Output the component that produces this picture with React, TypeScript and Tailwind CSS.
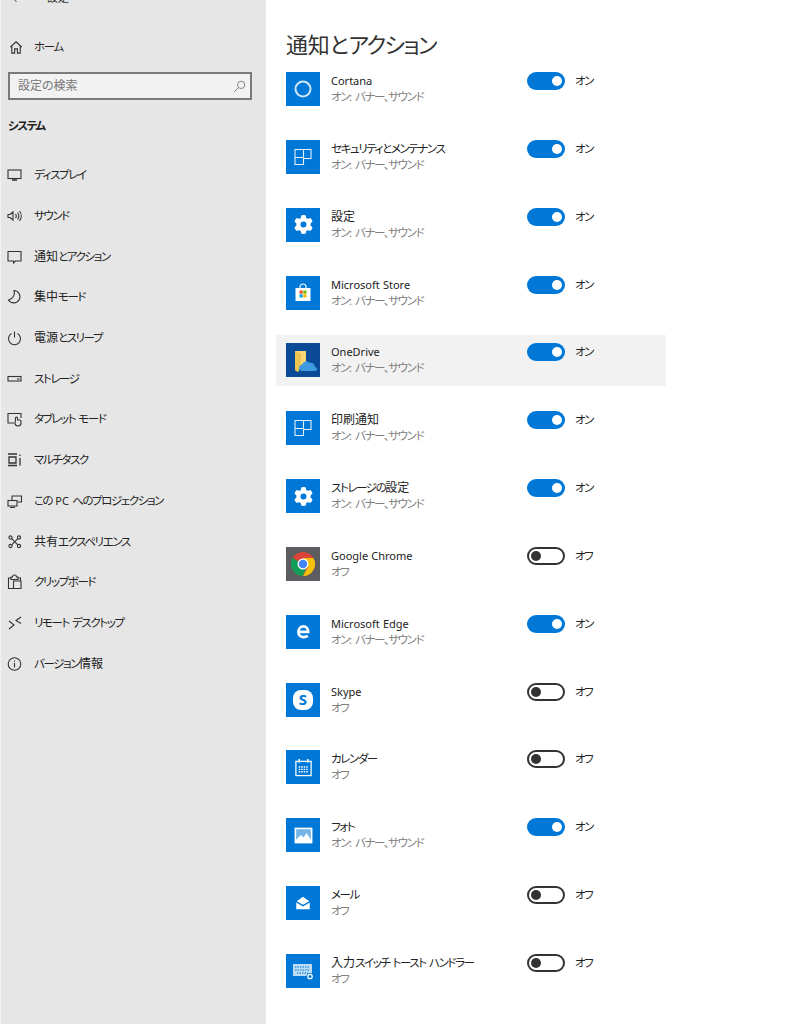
import React from "react";
import { FaGear } from "react-icons/fa6";

const font =
  "font-['Noto_Sans','Noto_Sans_CJK_JP',sans-serif] [font-feature-settings:'palt']";

const T = ({ children }: { children: string }) => (
  <>
    {children.split(/([ァ-ヶーぁ-ん、・]+|[A-Za-z:]+)/).map((part, i) => {
      if (!part) return null;
      if (/^[ァ-ヶーぁ-ん、・]/.test(part))
        return (
          <span key={i} className="text-[11.5px] tracking-[-1.4px]">
            {part}
          </span>
        );
      if (/^[A-Za-z:]/.test(part))
        return (
          <span key={i} className="text-[11px]">
            {part}
          </span>
        );
      return <span key={i}>{part}</span>;
    })}
  </>
);

const S = ({ children }: { children: React.ReactNode }) => (
  <svg viewBox="0 0 16 16" className="w-4 h-4 shrink-0" fill="none" stroke="#333" strokeWidth="1.1">
    {children}
  </svg>
);

const navIcons: Record<string, React.ReactNode> = {
  display: <S><rect x="1" y="3" width="13" height="8.500" /><path d="M5 13h5" strokeWidth="1.600" /></S>,
  sound: <S><path d="M1 6.500h2L6 4v8L3 9.500H1z" /><path d="M8.500 6a3 3 0 0 1 0 4M10.500 4.500a5.500 5.500 0 0 1 0 7M12.500 3a8 8 0 0 1 0 10" /></S>,
  notify: <S><path d="M1 2.500h13v9.500H8.500L6.500 14V12H1z" /></S>,
  moon: <S><path d="M7 1.500A6.200 6.200 0 1 1 1.500 11 7.500 7.500 0 0 0 7 1.500z" /></S>,
  power: <S><path d="M4.500 3.500a6 6 0 1 0 6 0M7.500 1.500v6" /></S>,
  storage: <S><rect x="1" y="5.500" width="13" height="4.500" /><path d="M10 8h2.500" /></S>,
  tablet: <S><path d="M7 12H1V2.500h13V7" /><path d="M8.500 9V7a1 1 0 0 1 2 0v2h2a1.500 1.500 0 0 1 1.500 1.500V12a3 3 0 0 1-6 0z" /></S>,
  multi: <S><path d="M1 2h9M1 13.500h9M2 5h7v6H2zM13 2.500v1.500M13 6v7.500" strokeWidth="1.300" /></S>,
  project: <S><rect x="1" y="7.500" width="9" height="5.500" /><path d="M5 7V3h9.500v6H10.500M3 14.500h5" /></S>,
  share: <S><circle cx="3.500" cy="3.500" r="1.600" /><circle cx="12" cy="3.500" r="1.600" /><circle cx="3.500" cy="12" r="1.600" /><circle cx="12" cy="12" r="1.600" /><path d="M4.700 4.700l6.100 6.100M10.800 4.700l-6.100 6.100" /></S>,
  clip: <S><path d="M4 4H1.500v10.500H6M11 4h2.500v2.500M4 5.500V3h1.500a2 2 0 0 1 4 0H11v2.500zM6.500 7h7.500v7.500H6.500z" /></S>,
  remote: <S><path d="M2 6l5 4-5 4M14 2L9 5.500l5 3" /></S>,
  info: <S><circle cx="7.500" cy="8" r="6.300" /><path d="M7.500 7v4.500M7.500 4.500v1.300" /></S>,
};

const nav = [
  ["ディスプレイ", "display"],
  ["サウンド", "sound"],
  ["通知とアクション", "notify"],
  ["集中モード", "moon"],
  ["電源とスリープ", "power"],
  ["ストレージ", "storage"],
  ["タブレット モード", "tablet"],
  ["マルチタスク", "multi"],
  ["この PC へのプロジェクション", "project"],
  ["共有エクスペリエンス", "share"],
  ["クリップボード", "clip"],
  ["リモート デスクトップ", "remote"],
  ["バージョン情報", "info"],
];

const Tile = ({ bg = "bg-[#0078d7]", children }: { bg?: string; children: React.ReactNode }) => (
  <div className={`w-[34px] h-[34px] shrink-0 flex items-center justify-center ${bg}`}>{children}</div>
);

const Panes = () => (
  <svg viewBox="0 0 20 20" className="w-5 h-5" fill="none" stroke="#e4f1fb" strokeWidth="1.100">
    <path d="M2 2.500h16v9H10.500v6H2zM10.500 2.500v9M2 10.500h8.500" />
  </svg>
);

const Gear = () => <FaGear className="w-[19px] h-[19px] text-white" />;

const apps: { name: string; on: boolean; icon: React.ReactNode; hi?: boolean }[] = [
  {
    name: "Cortana",
    on: true,
    icon: (
      <Tile>
        <svg viewBox="0 0 20 20" className="w-5 h-5" fill="none" stroke="#cfe6f8" strokeWidth="2">
          <circle cx="10" cy="10" r="7.500" />
        </svg>
      </Tile>
    ),
  },
  { name: "セキュリティとメンテナンス", on: true, icon: <Tile><Panes /></Tile> },
  { name: "設定", on: true, icon: <Tile><Gear /></Tile> },
  {
    name: "Microsoft Store",
    on: true,
    icon: (
      <Tile>
        <svg viewBox="0 0 20 20" className="w-5 h-5">
          <path d="M7 5V4a3 3 0 0 1 6 0v1" fill="none" stroke="#fff" strokeWidth="1.200" />
          <rect x="2.500" y="5" width="15" height="13" fill="#fff" />
          <rect x="6.500" y="7.500" width="3.200" height="3.200" fill="#f25022" />
          <rect x="10.300" y="7.500" width="3.200" height="3.200" fill="#7fba00" />
          <rect x="6.500" y="11.300" width="3.200" height="3.200" fill="#00a4ef" />
          <rect x="10.300" y="11.300" width="3.200" height="3.200" fill="#ffb900" />
        </svg>
      </Tile>
    ),
  },
  {
    name: "OneDrive",
    on: true,
    hi: true,
    icon: (
      <Tile bg="bg-[#0a4a96]">
        <svg viewBox="0 0 34 34" className="w-[34px] h-[34px]">
          <path d="M9 8h11v13l-5 1-3 7-3-2z" fill="#f7d774" />
          <path d="M9 8l6 3v11l-3 7-3-2z" fill="#eec24f" />
          <path d="M16 28a3 3 0 0 1 0-6 4.500 4.500 0 0 1 8-2 4 4 0 0 1 5 4 2 2 0 0 1 0 4z" fill="#3e9be0" />
        </svg>
      </Tile>
    ),
  },
  { name: "印刷通知", on: true, icon: <Tile><Panes /></Tile> },
  { name: "ストレージの設定", on: true, icon: <Tile><Gear /></Tile> },
  {
    name: "Google Chrome",
    on: false,
    icon: (
      <Tile bg="bg-[#5c5d60]">
        <svg viewBox="0 0 24 24" className="w-6 h-6">
          <circle cx="12" cy="12" r="12" fill="#db4437" />
          <path d="M12 12L1.600 6A12 12 0 0 0 12 24l5-12z" fill="#0f9d58" />
          <path d="M12 6h10.400A12 12 0 0 1 12 24l5.200-9z" fill="#f4c20d" />
          <circle cx="12" cy="12" r="5.500" fill="#fff" />
          <circle cx="12" cy="12" r="4.200" fill="#4285f4" />
        </svg>
      </Tile>
    ),
  },
  {
    name: "Microsoft Edge",
    on: true,
    icon: (
      <Tile>
        <svg viewBox="0 0 20 20" className="w-[17px] h-[17px]" fill="none" stroke="#fff" strokeWidth="3.200">
          <path d="M4 10.500h11.500C15.500 6.500 13 4 10 4s-6 2.500-6 6.500 3 6 6 6c2 0 4-.5 5-1.500" />
        </svg>
      </Tile>
    ),
  },
  {
    name: "Skype",
    on: false,
    icon: (
      <Tile>
        <div className="w-[20px] h-[20px] bg-white rounded-[8px] flex items-center justify-center text-[#0078d7] font-['Noto_Sans',sans-serif] font-bold text-[15px] leading-none">
          S
        </div>
      </Tile>
    ),
  },
  {
    name: "カレンダー",
    on: false,
    icon: (
      <Tile>
        <svg viewBox="0 0 20 20" className="w-[19px] h-[19px]" fill="none" stroke="#fff" strokeWidth="1.300">
          <rect x="2" y="3.500" width="16" height="15" />
          <path d="M5.500 1v4M14.500 1v4" strokeWidth="1.600" />
          <path d="M5 9.500h10M5 12h10M5 14.500h10" strokeWidth="1.500" strokeDasharray="1.600 1" />
        </svg>
      </Tile>
    ),
  },
  {
    name: "フォト",
    on: true,
    icon: (
      <Tile>
        <svg viewBox="0 0 20 20" className="w-[21px] h-[21px]">
          <rect x="1.500" y="2.500" width="17" height="15" fill="#fff" />
          <path d="M3 4h14v10l-4-6.500-3 4.500-2.500-2.500L3 14z" fill="#0078d7" fillOpacity="0.55" />
        </svg>
      </Tile>
    ),
  },
  {
    name: "メール",
    on: false,
    icon: (
      <Tile>
        <svg viewBox="0 0 20 20" className="w-[18px] h-[18px]">
          <path d="M3 8l7-5 7 5-7 4z" fill="#fff" />
          <path d="M2.500 9.500l7.500 4.500 7.500-4.500V17h-15z" fill="#fff" />
        </svg>
      </Tile>
    ),
  },
  {
    name: "入力スイッチ トースト ハンドラー",
    on: false,
    icon: (
      <Tile>
        <svg viewBox="0 0 24 24" className="w-6 h-6">
          <rect x="2" y="5" width="19" height="12" fill="#bcdcf4" />
          <path d="M4 8h15M4 11h15M6 14h11" stroke="#0078d7" strokeWidth="1" strokeDasharray="1.500 1" />
          <circle cx="19" cy="17.500" r="3.600" fill="#0078d7" />
          <circle cx="19" cy="17.500" r="2.200" fill="none" stroke="#fff" strokeWidth="1.300" />
        </svg>
      </Tile>
    ),
  },
];

const Toggle = ({ on }: { on: boolean }) =>
  on ? (
    <div className="w-[38px] h-[18px] rounded-full bg-[#0078d7] flex items-center justify-end pr-[3px]">
      <div className="w-[10px] h-[10px] rounded-full bg-white" />
    </div>
  ) : (
    <div className="w-[38px] h-[18px] rounded-full border-2 border-[#333] flex items-center pl-[2px]">
      <div className="w-[10px] h-[10px] rounded-full bg-[#333]" />
    </div>
  );

export default function App() {
  return (
    <div className={`flex w-[800px] h-[1024px] overflow-hidden bg-white text-[#222] ${font}`}>
      <aside className="w-[266px] shrink-0 bg-[#e6e6e6] border-l border-[#f2f2f2]">
        <div className="h-[12px] -mt-[8px] flex items-center pl-[10px] gap-[28px] text-[11px] leading-[12px] text-[#333]">
          <svg viewBox="0 0 10 12" className="w-[8px] h-[12px]" fill="none" stroke="#333" strokeWidth="1.100">
            <path d="M7 1L2 6l5 5" />
          </svg>
          <span>設定</span>
        </div>
        <div className="flex items-center h-[16px] mt-[35px] pl-[8px] gap-[10px] text-[12px]">
          <svg viewBox="0 0 16 16" className="w-[15px] h-[15px] shrink-0" fill="none" stroke="#333" strokeWidth="1.200">
            <path d="M1.500 7.500L7.500 2l6 5.500M3 6.500v7.500h3V9.500h3V14h3V6.500" />
          </svg>
          <span><T>ホーム</T></span>
        </div>
        <div className="mt-[17px] ml-[7px] w-[244px] h-[28px] border-2 border-[#7a7a7a] bg-[#f2f2f2] flex items-center justify-between pl-[8px] pr-[4px] text-[12px] text-[#777]">
          <span>設定の検索</span>
          <svg viewBox="0 0 16 16" className="w-[13px] h-[13px]" fill="none" stroke="#777" strokeWidth="1.100">
            <circle cx="10" cy="6" r="4.500" />
            <path d="M6.500 9.500L1.500 14.500" />
          </svg>
        </div>
        <div className="mt-[16px] ml-[7px] h-[20px] flex items-center text-[12px] font-bold text-[#222]">
          <span><T>システム</T></span>
        </div>
        <nav className="mt-[19px]">
          {nav.map(([label, k]) => (
            <div key={k} className="h-[40.7px] flex items-center pl-[6px] gap-[11px] text-[12px] text-[#222]">
              {navIcons[k]}
              <span className="whitespace-nowrap"><T>{label}</T></span>
            </div>
          ))}
        </nav>
      </aside>
      <main className="flex-1 pl-[10px]">
        <h1 className="ml-[10px] mt-[28px] h-[35.5px] text-[22px] leading-[32px] font-normal text-[#333] tracking-[-0.25px]">
          通知と<span className="tracking-[-1.6px]">アクション</span>
        </h1>
        <div className="w-[390px]">
          {apps.map((a) => (
            <div
              key={a.name}
              className={`h-[51px] mb-[16.85px] flex items-start pt-[8.5px] pl-[10px] ${a.hi ? "bg-[#f2f2f2]" : ""}`}
            >
              {a.icon}
              <div className="w-[207px] pl-[11px] mt-[1px] shrink-0">
                <div className="text-[12px] leading-[16px] text-[#222] whitespace-nowrap"><T>{a.name}</T></div>
                <div className="text-[12px] leading-[15px] text-[#808080] whitespace-nowrap">
                  <T>{a.on ? "オン: バナー、サウンド" : "オフ"}</T>
                </div>
              </div>
              <Toggle on={a.on} />
              <span className="ml-[10px] text-[12px] leading-[18px] text-[#222]">
                <T>{a.on ? "オン" : "オフ"}</T>
              </span>
            </div>
          ))}
        </div>
      </main>
    </div>
  );
}
